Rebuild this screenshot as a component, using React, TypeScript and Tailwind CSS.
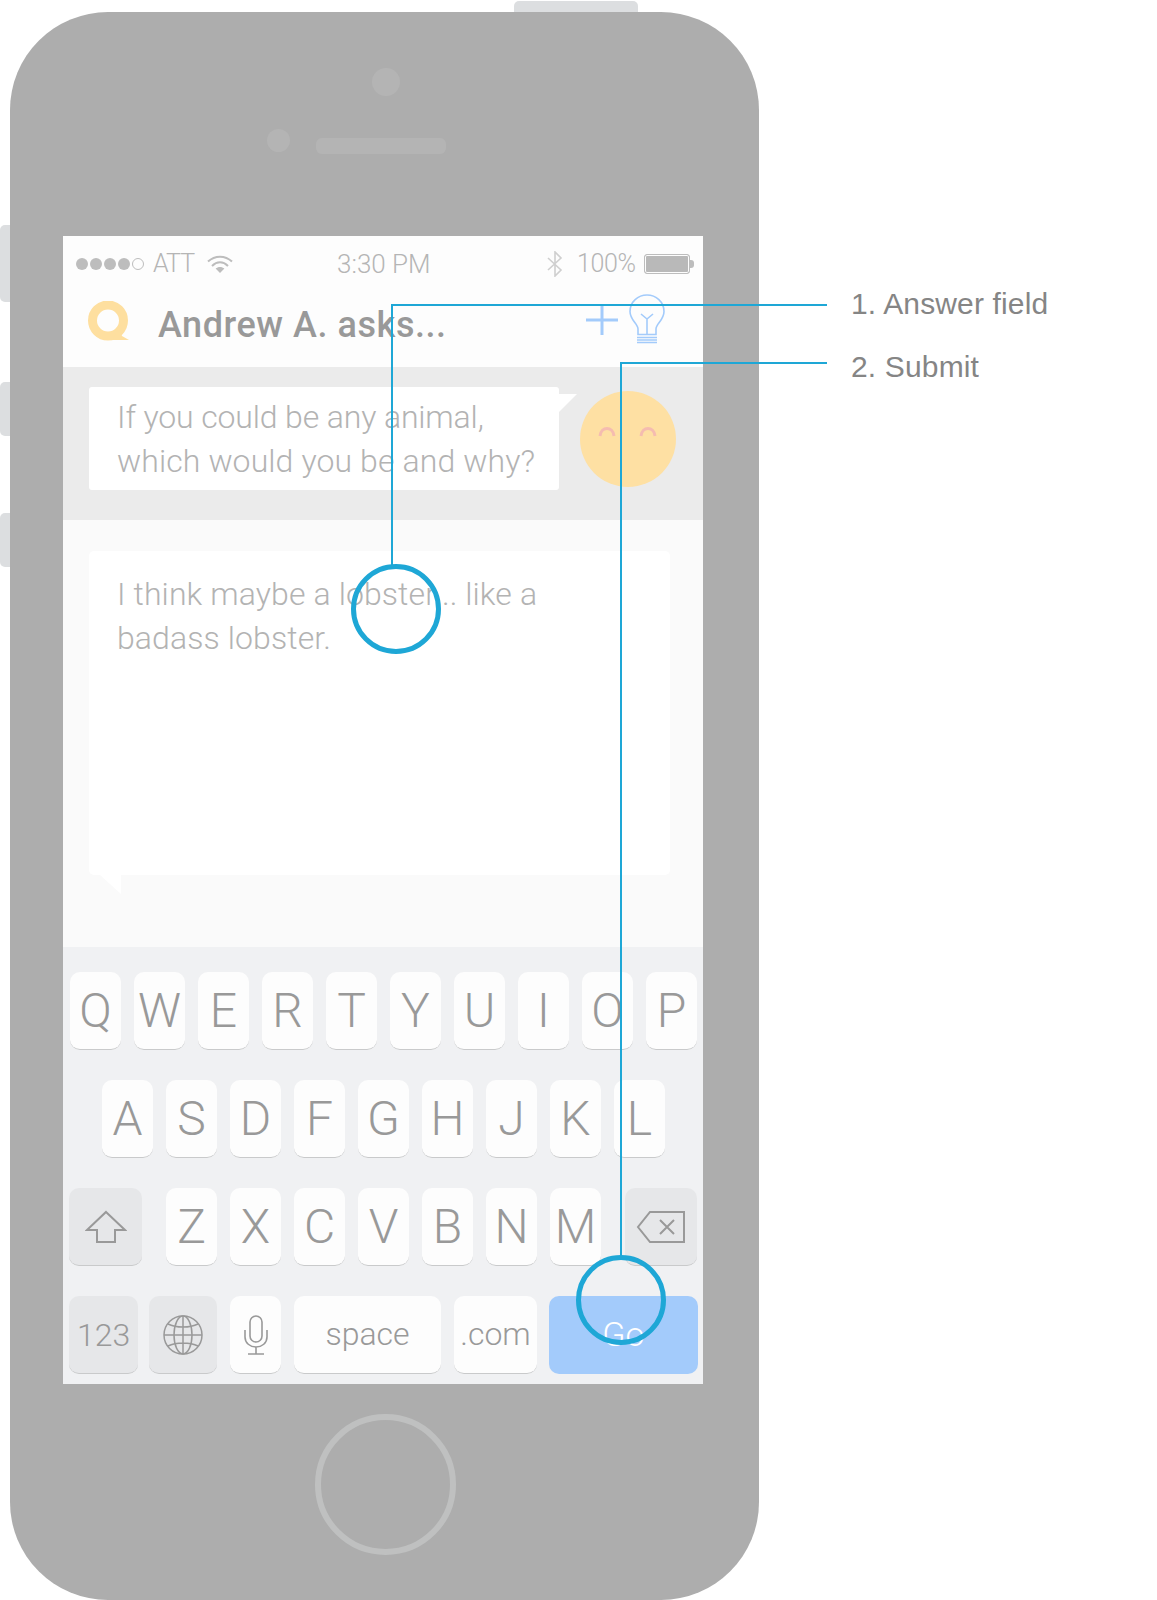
import React from "react";

const sans = "font-['Roboto','Liberation_Sans',sans-serif]";

const row1 = ["Q", "W", "E", "R", "T", "Y", "U", "I", "O", "P"];
const row2 = ["A", "S", "D", "F", "G", "H", "J", "K", "L"];
const row3 = ["Z", "X", "C", "V", "B", "N", "M"];

const Key = ({ label }: { label: string }) => (
  <div className="flex h-[78px] w-[51px] items-center justify-center rounded-[10px] border-b border-[#c9cacb] bg-[#fdfdfd] pt-[1px] text-[48px] font-light leading-none text-[#999999]">
    {label}
  </div>
);

const StatusBar = () => (
  <div className="flex h-[54px] items-center pl-[13px] pr-[9px] pt-[2px] text-[26px] font-light text-[#b5b5b5]">
    <div className="flex w-[68px] items-center gap-[2px]">
      <span className="h-[12px] w-[12px] rounded-full bg-[#bdbdbd]" />
      <span className="h-[12px] w-[12px] rounded-full bg-[#bdbdbd]" />
      <span className="h-[12px] w-[12px] rounded-full bg-[#bdbdbd]" />
      <span className="h-[12px] w-[12px] rounded-full bg-[#bdbdbd]" />
      <span className="h-[12px] w-[12px] rounded-full border border-[#bdbdbd]" />
    </div>
    <span className="ml-[9px] w-[54px] text-[25px] tracking-[-1px]">ATT</span>
    <svg width="26" height="19" viewBox="0 0 26 19" fill="none" stroke="#bdbdbd" strokeWidth="2">
      <path d="M1 6.5C8 0 18 0 25 6.5" />
      <path d="M5 11C10 6 16 6 21 11" />
      <path d="M13 18L8.6 13.6C11 11.4 15 11.4 17.4 13.6Z" fill="#bdbdbd" stroke="none" />
    </svg>
    <span className="ml-[104px] w-[209px]">3:30 PM</span>
    <svg width="18" height="26" viewBox="0 0 18 26" fill="none" stroke="#cfcfcf" strokeWidth="1.6">
      <path d="M2 7L15 19L9 25V1L15 7L2 19" />
    </svg>
    <span className="ml-[13px] w-[67px] text-[25px] tracking-[-0.4px]">100%</span>
    <div className="flex items-center">
      <div className="h-[20px] w-[46px] rounded-[3px] border border-[#bdbdbd] bg-[#b9b9b9] shadow-[inset_0_0_0_1px_#fdfdfd]" />
      <div className="h-[8px] w-[4px] rounded-r-[3px] bg-[#bdbdbd]" />
    </div>
  </div>
);

const Header = () => (
  <div className="flex h-[77px] items-start pl-[25px]">
    <svg className="mt-[11px]" width="41" height="41" viewBox="0 0 41 41" fill="none">
      <circle cx="20" cy="19.5" r="15.5" stroke="#fedf9f" strokeWidth="9" />
      <path d="M31 27L34 35L41 39H24Z" fill="#fedf9f" />
    </svg>
    <span className="ml-[29px] mt-[13px] w-[288px] whitespace-nowrap text-[36px] font-medium leading-[44px] tracking-[0.55px] text-[#999999]">
      Andrew A. asks...
    </span>
    <svg className="ml-[140px] mt-[15px]" width="32" height="30" viewBox="0 0 32 30" stroke="#a3cbfb" strokeWidth="3">
      <path d="M0 15H32M16 0V30" />
    </svg>
    <svg className="ml-[11px] mt-[4px]" width="36" height="50" viewBox="0 0 36 50" fill="none" stroke="#a3cbfb" strokeWidth="1.6">
      <path d="M9 40.5V35C9 30 1 26 1 17.5C1 8 9 1 18 1C27 1 35 8 35 17.5C35 26 27 30 27 35V40.5Z" />
      <path d="M18 40V25L12 20M18 25L24 20" />
      <path d="M8 43.5H28M8 46H28M8 48.5H28" strokeWidth="1.6" />
    </svg>
  </div>
);

const Question = () => (
  <div className="flex h-[153px] items-start bg-[#ebebeb] pl-[26px] pt-[20px]">
    <div className="flex h-[103px] w-[470px] flex-col justify-center rounded-[3px] bg-white pl-[28px] pt-[1px] text-[32px] font-light leading-[44px] text-[#b3b3b3]">
      <div className="tracking-[-0.15px]">If you could be any animal,</div>
      <div className="tracking-[0.1px]">which would you be and why?</div>
    </div>
    <svg className="mt-[7px]" width="18" height="18" viewBox="0 0 18 18">
      <path d="M0 0H18L0 18Z" fill="#ffffff" />
    </svg>
    <div className="ml-[3px] mt-[4px] h-[96px] w-[96px] rounded-full bg-[#fee0a3]">
      <svg width="96" height="96" viewBox="0 0 96 96" fill="none" stroke="#f5bcb0" strokeWidth="3">
        <path d="M20 45C21 35 33 35 34 45" />
        <path d="M61 45C62 35 74 35 75 45" />
      </svg>
    </div>
  </div>
);

const Answer = () => (
  <div className="h-[427px] bg-[#fafafa] pl-[26px] pt-[31px]">
    <div className="h-[324px] w-[581px] rounded-[5px] bg-white pl-[28px] pt-[21px] text-[32px] font-light leading-[44px] tracking-[0.1px] text-[#b3b3b3]">
      <div>I think maybe a lobster... like a</div>
      <div>badass lobster.</div>
    </div>
    <svg className="ml-[11px]" width="21" height="19" viewBox="0 0 21 19">
      <path d="M0 0H21V19Z" fill="#ffffff" />
    </svg>
  </div>
);

const Keyboard = () => (
  <div className="flex h-[437px] flex-col gap-[30px] bg-[#f0f1f3] pl-[7px] pt-[25px]">
    <div className="flex gap-[13px]">
      {row1.map((k) => (
        <Key key={k} label={k} />
      ))}
    </div>
    <div className="flex gap-[13px] pl-[32px]">
      {row2.map((k) => (
        <Key key={k} label={k} />
      ))}
    </div>
    <div className="-ml-[1px] flex items-center">
      <div className="flex h-[78px] w-[73px] items-center justify-center rounded-[10px] border-b border-[#c9cacb] bg-[#e6e7e9]">
        <svg width="42" height="34" viewBox="0 0 42 34" fill="none" stroke="#999999" strokeWidth="2">
          <path d="M21 2L40 20H30V32H12V20H2Z" />
        </svg>
      </div>
      <div className="ml-[24px] flex gap-[13px]">
        {row3.map((k) => (
          <Key key={k} label={k} />
        ))}
      </div>
      <div className="ml-[24px] flex h-[78px] w-[72px] items-center justify-center rounded-[10px] border-b border-[#c9cacb] bg-[#e6e7e9]">
        <svg width="50" height="34" viewBox="0 0 50 34" fill="none" stroke="#999999" strokeWidth="2">
          <path d="M14 2H48V32H14L2 17Z" />
          <path d="M24 10L38 24M38 10L24 24" />
        </svg>
      </div>
    </div>
    <div className="-ml-[1px] flex">
      <div className="flex h-[78px] w-[69px] items-center justify-center rounded-[10px] border-b border-[#c9cacb] bg-[#e6e7e9] text-[32px] font-light text-[#999999]">
        123
      </div>
      <div className="ml-[11px] flex h-[78px] w-[68px] items-center justify-center rounded-[10px] border-b border-[#c9cacb] bg-[#e6e7e9]">
        <svg width="40" height="40" viewBox="0 0 40 40" fill="none" stroke="#999999" strokeWidth="1.5">
          <circle cx="20" cy="20" r="19" />
          <ellipse cx="20" cy="20" rx="9" ry="19" />
          <path d="M20 1V39M1 20H39M5 9C13 13 27 13 35 9M5 31C13 27 27 27 35 31" />
        </svg>
      </div>
      <div className="ml-[13px] flex h-[78px] w-[51px] items-center justify-center rounded-[10px] border-b border-[#c9cacb] bg-[#fdfdfd]">
        <svg width="24" height="40" viewBox="0 0 24 40" fill="none" stroke="#999999" strokeWidth="1.6">
          <rect x="6" y="1" width="12" height="26" rx="6" />
          <path d="M1 15V22C1 28 6 32 12 32C18 32 23 28 23 22V15M12 32V39M4 39H20" />
        </svg>
      </div>
      <div className="ml-[13px] flex h-[78px] w-[147px] items-center justify-center rounded-[10px] border-b border-[#c9cacb] bg-[#fdfdfd] pb-[2px] text-[32px] font-light text-[#999999]">
        space
      </div>
      <div className="ml-[13px] flex h-[78px] w-[83px] items-center justify-center rounded-[10px] border-b border-[#c9cacb] bg-[#fdfdfd] pb-[2px] text-[32px] font-light text-[#999999]">
        .com
      </div>
      <div className="ml-[12px] flex h-[78px] w-[149px] items-center justify-center rounded-[10px] bg-[#a3cbfb] pb-[2px] text-[34px] font-light text-white">
        Go
      </div>
    </div>
  </div>
);

const Phone = () => (
  <div className="relative ml-[10px] mt-[12px] h-[1588px] w-[749px] shrink-0 rounded-[98px] bg-[#adadad] px-[53px]">
    <div className="flex h-[224px] flex-col">
      <div className="ml-[309px] mt-[56px] h-[28px] w-[28px] rounded-full bg-[#b4b4b4]" />
      <div className="mt-[33px] flex items-start">
        <div className="ml-[204px] h-[23px] w-[23px] rounded-full bg-[#b4b4b4]" />
        <div className="ml-[26px] mt-[9px] h-[16px] w-[130px] rounded-[6px] bg-[#b4b4b4]" />
      </div>
    </div>
    <div className="w-[640px] overflow-hidden">
      <div className="bg-[#fdfdfd]">
        <StatusBar />
        <Header />
      </div>
      <Question />
      <Answer />
      <Keyboard />
    </div>
    <div className="ml-[252px] mt-[30px] h-[141px] w-[141px] rounded-full border-[6px] border-[#bfc0c0]" />
  </div>
);

export default function App() {
  return (
    <div className={`relative h-[1600px] w-[1157px] overflow-hidden bg-white ${sans}`}>
      {/* hardware buttons behind the body */}
      <div className="absolute left-[514px] top-[1px] h-[20px] w-[124px] rounded-t-[5px] bg-[#dcdee0]" />
      <div className="absolute left-0 top-[225px] h-[77px] w-[20px] rounded-l-[5px] bg-[#dcdee0]" />
      <div className="absolute left-0 top-[382px] h-[54px] w-[20px] rounded-l-[5px] bg-[#dcdee0]" />
      <div className="absolute left-0 top-[513px] h-[54px] w-[20px] rounded-l-[5px] bg-[#dcdee0]" />

      <div className="relative flex items-start">
        <Phone />
        <div className="ml-[92px] mt-[282px] flex flex-col gap-[19px] font-['Liberation_Sans',sans-serif] text-[30px] leading-[44px] tracking-[0.15px] text-[#858585]">
          <div>1. Answer field</div>
          <div>2. Submit</div>
        </div>
      </div>

      {/* callouts */}
      <div className="absolute left-[391px] top-[304px] h-[2px] w-[436px] bg-[#1ea7d6]" />
      <div className="absolute left-[391px] top-[304px] h-[262px] w-[2px] bg-[#1ea7d6]" />
      <div className="absolute left-[351px] top-[564px] h-[90px] w-[90px] rounded-full border-[5px] border-[#1ea7d6]" />
      <div className="absolute left-[620px] top-[362px] h-[2px] w-[207px] bg-[#1ea7d6]" />
      <div className="absolute left-[620px] top-[362px] h-[894px] w-[2px] bg-[#1ea7d6]" />
      <div className="absolute left-[576px] top-[1255px] h-[90px] w-[90px] rounded-full border-[5px] border-[#1ea7d6]" />
    </div>
  );
}
